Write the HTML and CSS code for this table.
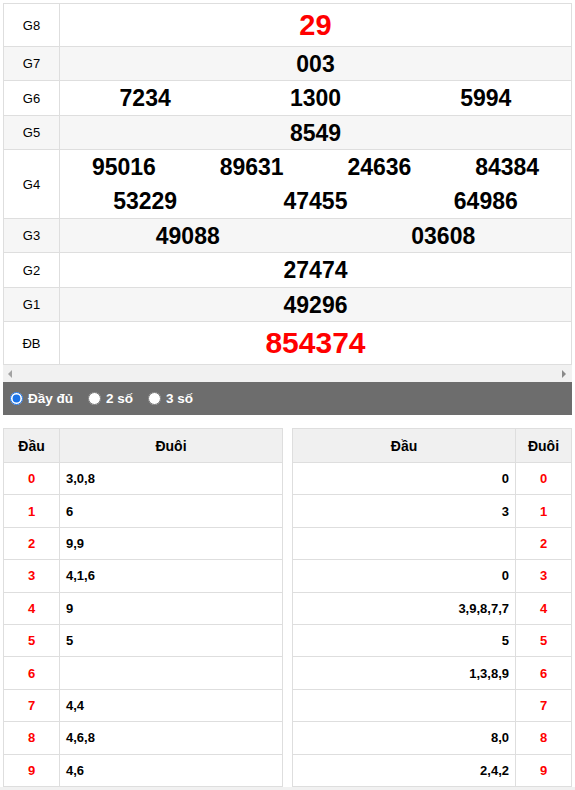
FILE: index.html
```html
<!DOCTYPE html>
<html lang="vi">
<head>
<meta charset="utf-8">
<title>Kết quả</title>
<link rel="stylesheet" href="styles.css">
</head>
<body>
<div class="page">
  <div class="scroll-box">
    <table class="prizes">
      <tr class="r-big"><td class="lbl">G8</td><td class="num big red">29</td></tr>
      <tr class="alt"><td class="lbl">G7</td><td class="num">003</td></tr>
      <tr class="r-tall"><td class="lbl">G6</td><td class="num"><div class="cols c3"><span>7234</span><span>1300</span><span>5994</span></div></td></tr>
      <tr class="alt"><td class="lbl">G5</td><td class="num">8549</td></tr>
      <tr class="r-g4"><td class="lbl">G4</td><td class="num"><div class="cols c4"><span>95016</span><span>89631</span><span>24636</span><span>84384</span></div><div class="cols c3"><span>53229</span><span>47455</span><span>64986</span></div></td></tr>
      <tr class="alt"><td class="lbl">G3</td><td class="num"><div class="cols c2"><span>49088</span><span>03608</span></div></td></tr>
      <tr class="r-tall"><td class="lbl">G2</td><td class="num">27474</td></tr>
      <tr class="alt"><td class="lbl">G1</td><td class="num">49296</td></tr>
      <tr class="r-big"><td class="lbl">ĐB</td><td class="num db red">854374</td></tr>
    </table>
    <div class="hscroll"><span class="arr left"></span><span class="arr right"></span></div>
  </div>

  <div class="modes">
    <label class="mode"><input type="radio" name="m" checked>Đầy đủ</label>
    <label class="mode"><input type="radio" name="m">2 số</label>
    <label class="mode"><input type="radio" name="m">3 số</label>
  </div>

  <div class="loto">
    <table class="lt">
      <tr><th class="k">Đầu</th><th>Đuôi</th></tr>
      <tr><td class="k">0</td><td class="v">3,0,8</td></tr>
      <tr><td class="k">1</td><td class="v">6</td></tr>
      <tr><td class="k">2</td><td class="v">9,9</td></tr>
      <tr><td class="k">3</td><td class="v">4,1,6</td></tr>
      <tr><td class="k">4</td><td class="v">9</td></tr>
      <tr><td class="k">5</td><td class="v">5</td></tr>
      <tr><td class="k">6</td><td class="v"></td></tr>
      <tr><td class="k">7</td><td class="v">4,4</td></tr>
      <tr><td class="k">8</td><td class="v">4,6,8</td></tr>
      <tr><td class="k">9</td><td class="v">4,6</td></tr>
    </table>
    <table class="lt">
      <tr><th>Đầu</th><th class="k">Đuôi</th></tr>
      <tr><td class="vr">0</td><td class="k">0</td></tr>
      <tr><td class="vr">3</td><td class="k">1</td></tr>
      <tr><td class="vr"></td><td class="k">2</td></tr>
      <tr><td class="vr">0</td><td class="k">3</td></tr>
      <tr><td class="vr">3,9,8,7,7</td><td class="k">4</td></tr>
      <tr><td class="vr">5</td><td class="k">5</td></tr>
      <tr><td class="vr">1,3,8,9</td><td class="k">6</td></tr>
      <tr><td class="vr"></td><td class="k">7</td></tr>
      <tr><td class="vr">8,0</td><td class="k">8</td></tr>
      <tr><td class="vr">2,4,2</td><td class="k">9</td></tr>
    </table>
  </div>
  <div class="bottom-strip"></div>
</div>
</body>
</html>
```

FILE: styles.css
```css
* { box-sizing: border-box; }
html, body { margin: 0; padding: 0; background: #fff; }
body {
  font-family: "Liberation Sans", Arial, sans-serif;
  font-size: 13px;
  color: #000;
}
.page { padding: 3px 3px 0 3px; }

.prizes {
  width: 569px;
  border-collapse: collapse;
  table-layout: fixed;
}
.prizes td {
  border: 1px solid #dedede;
  padding: 0;
  text-align: center;
  vertical-align: middle;
  height: 34px;
}
.prizes tr.alt td { background: #f6f6f6; }
.prizes tr.r-tall td { height: 35px; }
.prizes tr.r-big td { height: 43px; }
.prizes tr.r-g4 td { height: 69px; }
.prizes td.lbl { width: 56px; font-size: 13px; }
.prizes td.num {
  font-size: 23px;
  font-weight: bold;
  line-height: 26px;
}
.prizes td.big { font-size: 29px; }
.prizes td.db { font-size: 30px; }
.red { color: #f00; }
.cols { display: grid; height: 33px; align-items: center; }
.r-g4 .cols { height: 34px; }
.cols span { text-align: center; }
.c2 { grid-template-columns: repeat(2, 1fr); }
.c3 { grid-template-columns: repeat(3, 1fr); }
.c4 { grid-template-columns: repeat(4, 1fr); }

.hscroll {
  height: 17px;
  background: #f1f1f1;
  display: flex;
  justify-content: space-between;
  align-items: center;
  padding: 0 6px 0 5px;
}
.arr { width: 0; height: 0; border-top: 4px solid transparent; border-bottom: 4px solid transparent; }
.arr.left { border-right: 4px solid #a3a3a3; }
.arr.right { border-left: 4px solid #8a8a8a; }

.modes {
  background: #6d6d6d;
  height: 33px;
  display: flex;
  align-items: center;
  gap: 15px;
  padding-left: 7px;
}
.mode {
  color: #fff;
  font-weight: bold;
  font-size: 13.5px;
  display: flex;
  align-items: center;
  gap: 5px;
}
.mode input {
  margin: 0;
  width: 13px;
  height: 13px;
  accent-color: #1a73e8;
}

.loto {
  margin-top: 13px;
  display: flex;
  justify-content: space-between;
}
.lt {
  width: 280px;
  border-collapse: collapse;
}
.lt th, .lt td {
  border: 1px solid #dedede;
  height: 32.4px;
  padding: 0 7px;
  font-weight: bold;
  font-size: 13px;
}
.lt th {
  background: #f0f0f0;
  height: 34px;
  font-size: 14px;
  text-align: center;
}
.lt .k { width: 56px; text-align: center; }
.lt td.k { color: #f00; }
.lt td.v { text-align: left; padding-left: 6px; }
.lt td.vr { text-align: right; padding-right: 6px; }

.bottom-strip {
  height: 17px;
  margin: 0 -3px;
  background: #f1f1f1;
}
```
